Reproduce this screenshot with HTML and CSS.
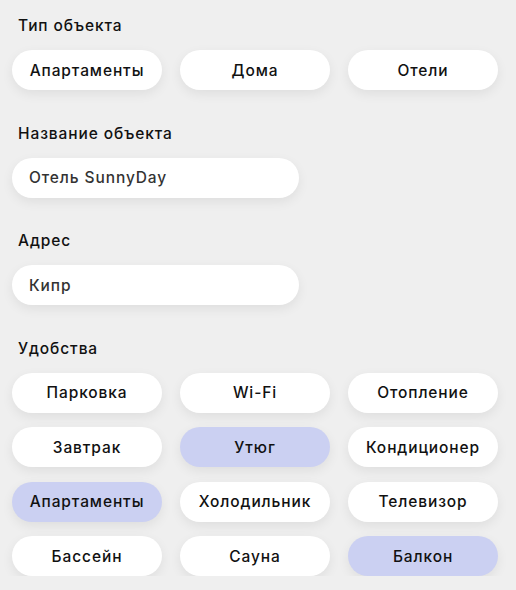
FILE: index.html
```html
<!DOCTYPE html>
<html lang="ru">
<head>
<meta charset="utf-8">
<link rel="stylesheet" href="styles.css">
</head>
<body>
<div class="form">
  <section class="section">
    <div class="label">Тип объекта</div>
    <div class="chips">
      <div class="chip">Апартаменты</div>
      <div class="chip">Дома</div>
      <div class="chip">Отели</div>
    </div>
  </section>
  <section class="section">
    <div class="label">Название объекта</div>
    <div class="input">Отель SunnyDay</div>
  </section>
  <section class="section">
    <div class="label">Адрес</div>
    <div class="input">Кипр</div>
  </section>
  <section class="section">
    <div class="label">Удобства</div>
    <div class="chips">
      <div class="chip">Парковка</div>
      <div class="chip">Wi-Fi</div>
      <div class="chip">Отопление</div>
      <div class="chip">Завтрак</div>
      <div class="chip active">Утюг</div>
      <div class="chip">Кондиционер</div>
      <div class="chip active">Апартаменты</div>
      <div class="chip">Холодильник</div>
      <div class="chip">Телевизор</div>
      <div class="chip">Бассейн</div>
      <div class="chip">Сауна</div>
      <div class="chip active">Балкон</div>
    </div>
  </section>
</div>
</body>
</html>
```
FILE: styles.css
```css
html, body {
  margin: 0;
  background: #efefef;
}
body {
  font-family: Inter, "Noto Sans", "Liberation Sans", sans-serif;
  color: #111;
}
.form {
  padding: 16px 12px 0 12px;
  display: flex;
  flex-direction: column;
  gap: 33.5px;
}
.label {
  font-size: 15.5px;
  line-height: 20px;
  font-weight: 500;
  letter-spacing: 0.9px;
  padding-left: 6px;
  margin-bottom: 14px;
}
.chips {
  display: grid;
  grid-template-columns: repeat(3, 150px);
  column-gap: 18px;
  row-gap: 14.5px;
}
.chip {
  height: 40px;
  border-radius: 20px;
  background: #fff;
  display: flex;
  align-items: center;
  justify-content: center;
  font-size: 15.5px;
  font-weight: 500;
  letter-spacing: 0.9px;
  box-shadow: 0 4px 12px rgba(0, 0, 0, 0.07);
}
.chip.active {
  background: #cbd0f2;
}
.input {
  width: 287px;
  height: 40px;
  box-sizing: border-box;
  border-radius: 20px;
  background: #fff;
  display: flex;
  align-items: center;
  padding-left: 17px;
  font-size: 15.5px;
  font-weight: 500;
  letter-spacing: 0.9px;
  color: #333;
  box-shadow: 0 4px 12px rgba(0, 0, 0, 0.07);
}
```
